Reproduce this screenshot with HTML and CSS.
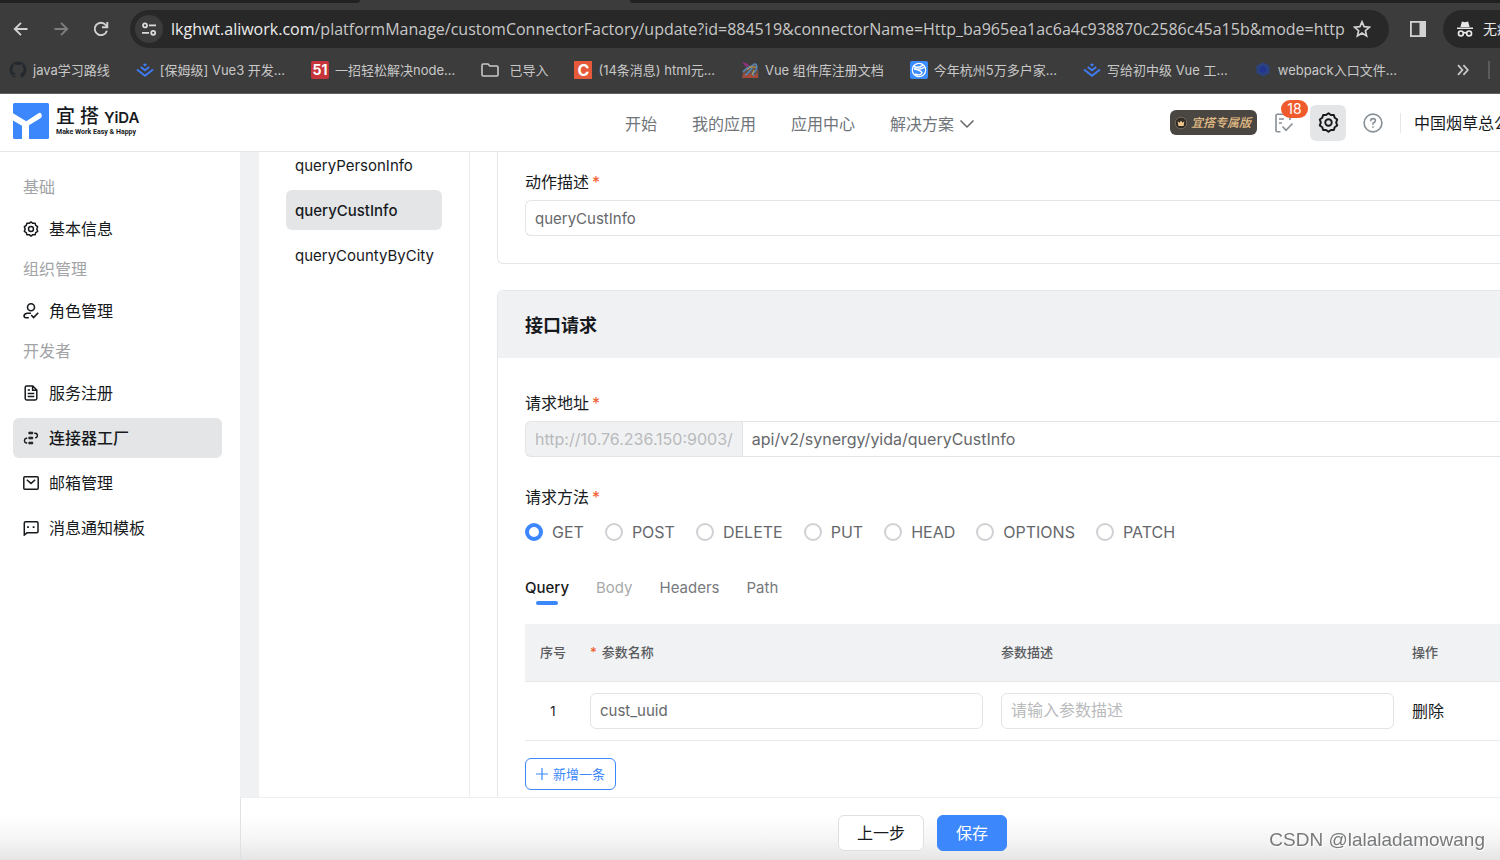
FILE: index.html
```html
<!DOCTYPE html>
<html lang="zh-CN">
<head>
<meta charset="utf-8">
<title>宜搭 - 连接器工厂</title>
<link rel="stylesheet" href="styles.css">
</head>
<body>
<svg class="defs" width="0" height="0" aria-hidden="true">
  <symbol id="gear" viewBox="0 0 20 20"><path d="M10 1.2 12.3 2.9 15.1 2.8 15.9 5.5 18.3 7.1 17.3 10 18.3 12.9 15.9 14.5 15.1 17.2 12.3 17.1 10 18.8 7.7 17.1 4.9 17.2 4.1 14.5 1.7 12.9 2.7 10 1.7 7.1 4.1 5.5 4.9 2.8 7.7 2.9Z" fill="none" stroke="currentColor" stroke-width="1.9" stroke-linejoin="round"/><circle cx="10" cy="10" r="3.1" fill="none" stroke="currentColor" stroke-width="1.8"/></symbol>
  <symbol id="juejin" viewBox="0 0 18 18"><path d="M9 2.2 11 3.8 9 5.4 7 3.8Z" fill="#3f7cf5"/><path d="M4.8 6 9 9.3 13.2 6M1 8.6 9 14.8 17 8.6" fill="none" stroke="#3f7cf5" stroke-width="1.9"/></symbol>
</svg>

<div class="browser">
  <div class="tabstrip"><span class="tabs-left"></span><span class="tabs-right"></span></div>
  <div class="toolbar">
    <button class="tool" aria-label="后退"><svg viewBox="0 0 16 16" width="16" height="16"><path d="M14.5 8H2M8 1.8 1.8 8 8 14.2" fill="none" stroke="#d2d2d2" stroke-width="1.9"/></svg></button>
    <button class="tool" aria-label="前进"><svg viewBox="0 0 16 16" width="16" height="16"><path d="M1.5 8H14M8 1.8 14.2 8 8 14.2" fill="none" stroke="#7e7e7e" stroke-width="1.9"/></svg></button>
    <button class="tool" aria-label="刷新"><svg viewBox="0 0 16 16" width="16" height="16"><path d="M13.9 9.8A6.2 6.2 0 1 1 12.8 4L14.2 5.6" fill="none" stroke="#d2d2d2" stroke-width="1.9"/><path d="M14.3 1V6.2H9" fill="none" stroke="#d2d2d2" stroke-width="1.9"/></svg></button>
    <div class="address">
      <span class="site"><svg viewBox="0 0 16 16" width="16" height="16" fill="none" stroke="#dcdcdc" stroke-width="1.8"><circle cx="4" cy="4.4" r="2"/><path d="M8 4.4H15M1 11.8H8"/><circle cx="12.2" cy="11.8" r="2"/></svg></span>
      <span class="url"><b>lkghwt.aliwork.com</b>/platformManage/customConnectorFactory/update?id=884519&amp;connectorName=Http_ba965ea1ac6a4c938870c2586c45a15b&amp;mode=http</span>
      <button class="tool" aria-label="收藏"><svg viewBox="0 0 18 18" width="18" height="18"><path d="M9 1.8 11.1 6.7 16.4 7.2 12.4 10.7 13.6 15.9 9 13.1 4.4 15.9 5.6 10.7 1.6 7.2 6.9 6.7Z" fill="none" stroke="#d2d2d2" stroke-width="1.7"/></svg></button>
    </div>
    <button class="tool panel" aria-label="侧边栏"><svg viewBox="0 0 18 18" width="18" height="18"><rect x="1.9" y="1.9" width="14.2" height="14.2" fill="none" stroke="#d2d2d2" stroke-width="1.8"/><path d="M10.5 2H16V16H10.5Z" fill="#d2d2d2"/></svg></button>
    <button class="incognito"><svg viewBox="0 0 18 18" width="18" height="18"><path d="M4.4 7 5.9 1.5 9 2.3 12.1 1.5 13.6 7Z" fill="#e8e8e8"/><path d="M1 8.2H17" stroke="#e8e8e8" stroke-width="1.6"/><g fill="none" stroke="#e8e8e8" stroke-width="1.7"><circle cx="4.9" cy="13.4" r="2.4"/><circle cx="13.1" cy="13.4" r="2.4"/><path d="M7.3 13Q9 12.2 10.7 13"/></g></svg><span>无痕</span></button>
  </div>
  <nav class="bookmarks">
    <a href="#"><svg viewBox="0 0 18 18" width="18" height="18"><path d="M9 .5A8.5 8.5 0 0 0 6.3 17V14.7C4 15 3.7 13.4 2.9 12.8 4.2 12.5 4.6 14.2 6.3 13.6L6.9 12.5C4.6 12 3.4 10.8 3.4 8.2 3.4 7 3.8 6.2 4.5 5.5 4.1 4.5 4.4 3.6 4.7 3 5.9 3 6.6 3.5 7.2 4A9 9 0 0 1 10.8 4C11.5 3.5 12.2 3 13.3 3 13.6 3.7 13.8 4.6 13.5 5.5 14.2 6.2 14.6 7 14.6 8.2 14.6 10.8 13.4 12 11.1 12.5 11.7 13 11.8 13.7 11.8 14.5V17A8.5 8.5 0 0 0 9 .5Z" fill="#24292f"/></svg><span>java学习路线</span></a>
    <a href="#"><svg width="18" height="18"><use href="#juejin"/></svg><span>[保姆级] Vue3 开发...</span></a>
    <a href="#"><i class="fav fav-51">51</i><span>一招轻松解决node...</span></a>
    <a href="#"><svg viewBox="0 0 18 18" width="18" height="18"><path d="M1 4.2Q1 3 2.2 3H7L8.8 5H15.8Q17 5 17 6.2V13.8Q17 15 15.8 15H2.2Q1 15 1 13.8Z" fill="none" stroke="#c8c8c8" stroke-width="1.6"/></svg><span class="folder">已导入</span></a>
    <a href="#"><i class="fav fav-c">C</i><span>(14条消息) html元...</span></a>
    <a href="#"><svg viewBox="0 0 18 18" width="18" height="18"><path d="M1 17 2 9 8 5 15 4 17.5 10V17Z" fill="#66524d"/><path d="M1 1 5 2 9 5 5 6Z" fill="#8d317c"/><path d="M1 17 3 12 7 14 9 12 12 15 17 12V17Z" fill="#a64a38"/><path d="M2 11C6 5 9 7 12 4S17 5 15 9 10 10 13 15M4 14C7 14 9 9 11 7" fill="none" stroke="#5684b8" stroke-width="1.6"/><path d="M6 9 9 6 15 6M13 9 11 14" fill="none" stroke="#c2a744" stroke-width="1"/></svg><span>Vue 组件库注册文档</span></a>
    <a href="#"><svg viewBox="0 0 18 18" width="18" height="18"><rect width="18" height="18" rx="2" fill="#3b8cff"/><circle cx="9" cy="9" r="6.7" fill="none" stroke="#fff" stroke-width="1.2"/><path d="M3 5C7 7 10 7 13 4M4 7.5C8 9 12 8 15 6M4 8C10 9 13 11 11.5 12.5S7 14 5 13" fill="none" stroke="#fff" stroke-width="1.4"/></svg><span>今年杭州5万多户家...</span></a>
    <a href="#"><svg width="18" height="18"><use href="#juejin"/></svg><span>写给初中级 Vue 工...</span></a>
    <a href="#"><svg viewBox="0 0 18 18" width="18" height="18"><path d="M9 1.5 15.5 4.8V12L9 15.5 2.5 12V4.8Z" fill="#2b4280"/><path d="M9 5 12.3 6.8V10.3L9 12.1 5.7 10.3V6.8Z" fill="#22368f"/></svg><span>webpack入口文件...</span></a>
    <button class="tool more" aria-label="更多书签"><svg viewBox="0 0 14 12" width="14" height="12"><path d="M2 1.2 6.4 6 2 10.8M7.4 1.2 11.8 6 7.4 10.8" fill="none" stroke="#c8c8c8" stroke-width="1.8"/></svg></button>
  </nav>
</div>

<header class="header">
  <a class="logo" href="#" aria-label="宜搭 YiDA">
    <svg viewBox="0 0 36 36" width="36" height="36"><rect width="36" height="36" rx="1.5" fill="#3b87fb"/><path d="M0 10.2 13.3 18.2 25.5 10.2Q28 9 28.8 12 29 14.5 27.5 15.3L16 22.3V36H9V22.8L0 17.4Z" fill="#fff"/></svg>
    <span class="wordmark"><span class="names"><span class="cn">宜 搭</span><span class="en">YiDA</span></span><span class="slogan">Make Work Easy &amp; Happy</span></span>
  </a>
  <nav class="mainnav">
    <a href="#">开始</a><a href="#">我的应用</a><a href="#">应用中心</a>
    <a href="#">解决方案<svg viewBox="0 0 16 10" width="16" height="10"><path d="M1.5 1.5 8 8 14.5 1.5" fill="none" stroke="#666" stroke-width="1.5"/></svg></a>
  </nav>
  <div class="actions">
    <span class="edition"><svg viewBox="0 0 14 14" width="14" height="14"><circle cx="7" cy="7" r="5.8" fill="#2f2b27" stroke="#77695a" stroke-width="1"/><path d="M3.7 5.3 5.6 6.7 7 4.4 8.4 6.7 10.3 5.3 9.6 10H4.4Z" fill="#efc78b"/></svg>宜搭专属版</span>
    <button class="todo" aria-label="待办"><svg viewBox="0 0 20 20" width="20" height="20" fill="none" stroke="#878f95" stroke-width="1.6"><path d="M16 7V2.5Q16 1.2 14.8 1.2H3.2Q2 1.2 2 2.4V17.6Q2 18.8 3.2 18.8H6.5M5 6H10M5 10H8M8.5 13.5 12 17.3 18.5 10.5"/></svg><span class="count">18</span></button>
    <button class="settings" aria-label="设置"><svg width="21" height="21"><use href="#gear"/></svg></button>
    <button class="help" aria-label="帮助"><svg viewBox="0 0 20 20" width="20" height="20" fill="none" stroke="#878f95" stroke-width="1.6"><circle cx="10" cy="10" r="8.9"/><path d="M7.6 8.2Q7.6 5.6 10 5.6T12.4 7.8Q12.4 9.2 10 10.2V11.8M10 13.2V14.8"/></svg></button>
    <span class="org">中国烟草总公</span>
  </div>
</header>

<div class="workspace">
  <nav class="sidebar">
    <h2>基础</h2>
    <a href="#"><svg width="16" height="16"><use href="#gear"/></svg>基本信息</a>
    <h2>组织管理</h2>
    <a href="#"><svg viewBox="0 0 16 16" width="16" height="16" fill="none" stroke="#171a1d" stroke-width="1.6"><circle cx="8" cy="4.3" r="3.5"/><path d="M8 10.2H4.2Q1 10.6 1 13.2 1.2 14.8 3 14.8H5.8M8.2 12 10.6 14.6 15.2 9.7"/></svg>角色管理</a>
    <h2>开发者</h2>
    <a href="#"><svg viewBox="0 0 16 16" width="16" height="16" fill="none" stroke="#171a1d" stroke-width="1.5"><path d="M9.8 1H3.6Q2.2 1 2.2 2.4V13.6Q2.2 15 3.6 15H12.4Q13.8 15 13.8 13.6V5ZM9.6 1V5.2H13.8M4.7 5H7M4.7 8.4H11.3M4.7 11.5H11.3"/></svg>服务注册</a>
    <a href="#" class="current"><svg viewBox="0 0 16 16" width="16" height="16" fill="none" stroke="#171a1d" stroke-width="1.4"><path d="M5.9 2.2H9.7V3.8H5.9ZM5.9 7.2H9.7V8.8H5.9ZM5.9 12.2H9.7V13.8H5.9Z" fill="#171a1d" stroke-width="1"/><path d="M11.2 3.2H12.2Q14.4 3.4 14.4 5.4T12.2 7.8M4.2 8.2H3.4Q1.4 8.6 1.4 10.6T3.4 13H4.2"/></svg>连接器工厂</a>
    <a href="#"><svg viewBox="0 0 16 16" width="16" height="16" fill="none" stroke="#171a1d" stroke-width="1.5"><rect x=".8" y="1.8" width="14.4" height="12.4" rx="1"/><path d="M3.8 4.8 8 8.4 12.2 4.8"/></svg>邮箱管理</a>
    <a href="#"><svg viewBox="0 0 16 16" width="16" height="16" fill="none" stroke="#171a1d" stroke-width="1.5"><path d="M1.3 15V3Q1.3 1.8 2.5 1.8H13.8Q15 1.8 15 3V11.6Q15 12.8 13.8 12.8H4Z"/><path d="M5 6.2V8M10.6 6.2V8" stroke-width="1.8"/></svg>消息通知模板</a>
  </nav>

  <div class="content">
    <div class="scroll">
      <nav class="actions-list">
        <a href="#">queryPersonInfo</a>
        <a href="#" class="current">queryCustInfo</a>
        <a href="#">queryCountyByCity</a>
      </nav>
      <main class="main">
        <section class="card basic">
          <label class="label" for="desc">动作描述<em>*</em></label>
          <input class="field" id="desc" value="queryCustInfo">
        </section>
        <section class="card">
          <h3>接口请求</h3>
          <div class="cardbody">
            <label class="label" for="path">请求地址<em>*</em></label>
            <div class="group"><span class="prefix">http://10.76.236.150:9003/</span><input class="field" id="path" value="api/v2/synergy/yida/queryCustInfo"></div>
            <fieldset class="methods">
              <legend class="label">请求方法<em>*</em></legend>
              <label><input type="radio" name="m" checked>GET</label>
              <label><input type="radio" name="m">POST</label>
              <label><input type="radio" name="m">DELETE</label>
              <label><input type="radio" name="m">PUT</label>
              <label><input type="radio" name="m">HEAD</label>
              <label><input type="radio" name="m">OPTIONS</label>
              <label><input type="radio" name="m">PATCH</label>
            </fieldset>
            <div class="tabs" role="tablist">
              <button role="tab" aria-selected="true">Query</button>
              <button role="tab" disabled>Body</button>
              <button role="tab">Headers</button>
              <button role="tab">Path</button>
            </div>
            <table class="params">
              <thead><tr><th class="no">序号</th><th><em>*</em>参数名称</th><th>参数描述</th><th class="op">操作</th></tr></thead>
              <tbody><tr>
                <td class="no">1</td>
                <td><input class="field" aria-label="参数名称" value="cust_uuid"></td>
                <td><input class="field" aria-label="参数描述" placeholder="请输入参数描述"></td>
                <td class="op"><button class="delete">删除</button></td>
              </tr></tbody>
            </table>
            <button class="add"><svg viewBox="0 0 12 12" width="12" height="12"><path d="M6 0V12M0 6H12" stroke="#3b87fb" stroke-width="1.2"/></svg>新增一条</button>
          </div>
        </section>
      </main>
    </div>
    <footer class="footer">
      <button class="btn">上一步</button>
      <button class="btn primary">保存</button>
    </footer>
  </div>
</div>
<div class="watermark">CSDN @lalaladamowang</div>
</body>
</html>
```
FILE: styles.css
```css
* { box-sizing: border-box; }
html, body { height: 100%; }
body {
  margin: 0;
  display: flex;
  flex-direction: column;
  overflow: hidden;
  background: #fff;
  color: #171a1d;
  font: 16px/20px "Inter", "Noto Sans CJK SC", sans-serif;
}
button, input { font: inherit; color: inherit; }
button { border: 0; padding: 0; background: none; white-space: nowrap; }
a { color: inherit; text-decoration: none; white-space: nowrap; }
svg { flex: none; display: block; }
.defs { position: absolute; }

/* browser chrome */
.browser { flex: none; height: 94px; background: #3c3c3c; border-bottom: 1px solid #606060; overflow: hidden; }
.tabstrip { display: flex; height: 3px; justify-content: space-between; }
.tabs-left { width: 24%; background: #202221; border-bottom-right-radius: 6px; }
.tabs-right { width: 58%; background: #202221; border-bottom-left-radius: 6px; }
.toolbar { display: flex; align-items: center; height: 52px; padding-left: 12px; }
.tool { display: flex; align-items: center; justify-content: center; width: 18px; flex: none; }
.toolbar > .tool { margin-right: 22px; }
.toolbar > .tool:nth-child(3) { margin-right: 20px; }
.address { flex: 1; min-width: 0; display: flex; align-items: center; height: 38px; padding: 0 18px 0 5px; border-radius: 19px; background: #282828; }
.site { display: flex; align-items: center; justify-content: center; width: 28px; height: 28px; border-radius: 50%; background: #3c3c3c; flex: none; }
.url { flex: 1; min-width: 0; margin: 0 4px 0 8px; overflow: hidden; white-space: nowrap; font-family: "Open Sans", sans-serif; font-size: 16px; color: #c7c7c7; }
.url b { font-weight: 400; color: #ececec; }
.toolbar > .panel { margin: 0 16px 0 20px; }
.incognito { display: flex; align-items: center; gap: 9px; width: 57px; height: 38px; padding-left: 13px; border-radius: 19px 0 0 19px; background: #282828; color: #e8e8e8; font-size: 14px; overflow: hidden; }
.bookmarks { display: flex; align-items: center; gap: 26px; height: 30px; padding: 0 10px 0 9px; color: #c8c8c8; font-size: 13px; }
.bookmarks a { display: flex; align-items: center; gap: 6px; }
.folder { padding-left: 4px; }
.more { width: 34px; height: 18px; justify-content: flex-start; margin-left: auto; border-right: 2px solid #5c5c5c; }
.fav { width: 18px; height: 18px; line-height: 18px; text-align: center; font-style: normal; font-weight: 700; color: #fff; }
.fav-51 { border-radius: 2px; background: #c7353b; font-size: 14px; }
.fav-c { background: #e6593a; font-size: 16px; }

/* product header */
.header { flex: none; display: grid; grid-template-columns: 1fr auto 525px; align-items: center; height: 58px; padding-left: 13px; border-bottom: 1px solid #e6e7e8; overflow: hidden; }
.logo { display: flex; gap: 7px; align-items: center; padding-bottom: 4px; }
.wordmark { display: flex; flex-direction: column; padding-top: 2px; }
.names { display: flex; align-items: baseline; gap: 5px; }
.cn { font-size: 19px; line-height: 22px; font-weight: 500; }
.en { font-size: 15px; font-weight: 600; line-height: 20px; }
.slogan { font: 700 7px/9px "Roboto", sans-serif; }
.mainnav { display: flex; gap: 35px; padding-top: 2px; color: #70757a; }
.mainnav a { display: flex; align-items: center; gap: 5px; }
.actions { display: flex; align-items: center; justify-content: flex-end; }
.edition { display: flex; align-items: center; gap: 3px; width: 87px; height: 25px; padding-left: 4px; border-radius: 6px; background: #4a4642; color: #e3bd85; font-size: 12px; font-weight: 500; font-style: italic; white-space: nowrap; }
.todo { position: relative; margin: 0 16px 0 17px; }
.count { position: absolute; left: 7px; top: -13px; width: 27px; height: 18px; border-radius: 9px; background: #f05b2d; color: #fff; font-size: 14px; line-height: 18px; }
.settings { display: flex; align-items: center; justify-content: center; width: 36px; height: 36px; border-radius: 6px; background: #e4e5e7; }
.help { margin: 0 17px; }
.org { width: 100px; padding-left: 13px; border-left: 1px solid #e5e6e8; overflow: hidden; white-space: nowrap; }

/* workspace */
.workspace {
  flex: 1;
  min-height: 0;
  display: flex;
  background: linear-gradient(to top, #e5e5e5, #f5f5f5 20px, #fff 44px);
}
.sidebar { flex: none; width: 240px; padding: 15px 18px 0 13px; }
.sidebar h2 { margin: 0; height: 42px; padding: 10px; font-size: 16px; font-weight: 400; line-height: 20px; color: #a2a3a5; }
.sidebar a { display: flex; align-items: center; gap: 10px; height: 40px; padding-left: 10px; border-radius: 6px; }
.sidebar a + a { margin-top: 5px; }
.sidebar .current { background: #e4e5e7; font-weight: 500; }
.content { flex: 1; min-width: 0; display: flex; flex-direction: column; }
.scroll { flex: 1; min-height: 0; display: flex; padding-left: 19px; background: linear-gradient(to right, #f0f1f3 19px, #fff 19px); overflow: hidden; }
.actions-list { flex: none; display: flex; flex-direction: column; gap: 5px; width: 211px; margin-top: -7px; padding: 0 27px; border-right: 1px solid #ececee; }
.actions-list a { height: 40px; padding-left: 9px; border-radius: 6px; font-size: 15px; line-height: 42px; }
.actions-list .current { background: #e4e5e7; font-weight: 500; }
.main { flex: 1; min-width: 0; padding-left: 27px; }
.card { border: 1px solid #e5e6e8; border-right: 0; border-radius: 6px 0 0 6px; }
.basic { margin-bottom: 26px; padding: 20px 0 27px 27px; border-top: 0; border-top-left-radius: 0; }
.card h3 { margin: 0; padding: 25px 27px 22px; border-radius: 6px 0 0 0; background: #f0f1f3; font-size: 18px; line-height: 20px; font-weight: 600; }
.cardbody { padding: 35px 0 27px 27px; }
.label { display: block; padding: 0; margin-bottom: 8px; line-height: 20px; }
.label em { margin-left: 3px; }
em { font-style: normal; color: #f05b2d; }
.field { display: block; width: 100%; height: 36px; padding: 0 9px; border: 1px solid #e3e4e6; border-radius: 6px; background: #fff; color: #66686b; font-size: 15px; outline: 0; }
.field::placeholder { color: #b8babc; font-size: 16px; opacity: 1; }
.basic .field, .group .field { border-right: 0; border-radius: 6px 0 0 6px; }
.group { display: flex; }
.group .field { flex: 1; border-radius: 0; font-size: 16px; }
.prefix { padding: 0 9px; border: 1px solid #e3e4e6; border-right: 0; border-radius: 6px 0 0 6px; background: #f0f1f3; color: #b8babc; line-height: 34px; }
.methods { display: flex; gap: 21px; margin: 30px 0 0; padding: 0; border: 0; }
.methods label { display: flex; align-items: center; gap: 9px; color: #66686b; line-height: 32px; }
.methods .label { margin-bottom: 9px; }
.methods input { appearance: none; width: 18px; height: 18px; margin: 0; border: 2px solid #cfd1d4; border-radius: 50%; background: #fff; }
.methods input:checked { border: 4px solid #3b87fb; }
.tabs { display: flex; gap: 27px; margin: 27px 0 19px; }
.tabs button { position: relative; height: 30px; padding-bottom: 4px; color: #77797c; font-size: 15px; }
.tabs button:disabled { color: #a8aaac; }
.tabs [aria-selected="true"] { color: #171a1d; font-weight: 500; }
.tabs [aria-selected="true"]::after { content: ""; position: absolute; left: calc(50% - 11px); bottom: 0; width: 22px; height: 4px; border-radius: 2px; background: #3b87fb; }
.params { width: 100%; table-layout: fixed; border-collapse: collapse; }
.params th { height: 57px; padding: 0 9px; border-bottom: 1px solid #e6e7e9; background: #f1f2f4; color: #595b5e; font-size: 13px; font-weight: 500; text-align: left; }
.params th em { margin-right: 5px; }
.params td { height: 59px; padding: 0 9px; border-bottom: 1px solid #e9eaec; }
.params .no { width: 56px; padding: 0; text-align: center; font-size: 13px; }
.params .op { width: 97px; }
.add { display: flex; align-items: center; gap: 5px; height: 32px; margin-top: 17px; padding: 0 10px; border: 1px solid #3b87fb; border-radius: 6px; color: #3b87fb; font-size: 13px; }
.footer { flex: none; display: flex; justify-content: center; align-items: flex-start; gap: 13px; height: 63px; padding: 17px 0 0 104px; border-top: 1px solid #eeeff0; border-left: 1px solid #e0e1e2; }
.btn { height: 36px; padding: 0 18px; border: 1px solid #dedfe1; border-radius: 6px; background: #fff; }
.primary { border-color: #3b87fb; background: #3b87fb; color: #fff; }

.watermark { position: fixed; right: 15px; bottom: 8px; color: #77797b; font: 19px/24px "Liberation Sans", sans-serif; text-shadow: 1px 1px 0 #fff; }
```
